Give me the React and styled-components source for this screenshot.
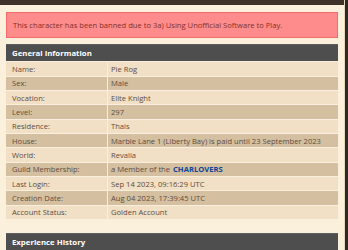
import React from "react";
import styled, { createGlobalStyle } from "styled-components";

const GlobalStyle = createGlobalStyle`
  html, body {
    margin: 0;
    padding: 0;
    background: #2f2923;
  }
  body {
    font-family: "Open Sans", "DejaVu Sans", sans-serif;
  }
`;

const Page = styled.div`
  display: flex;
  width: 348px;
  height: 250px;
  overflow: hidden;
`;

const Panel = styled.div`
  flex: 1;
  display: flex;
  flex-direction: column;
  background: #fbf0dc;
  border-right: 1px solid #e6d6bb;
`;

const Edge = styled.div`
  width: 3px;
  background: #2f2923;
`;

const TitleBar = styled.div`
  height: 7px;
  background: #3d332b;
  display: flex;
  align-items: flex-end;
  justify-content: center;
  overflow: hidden;
`;

const Title = styled.span`
  font-size: 13px;
  line-height: 13px;
  color: #7d746b;
  font-weight: 600;
  margin-bottom: 4px;
  padding-right: 8px;
`;

const Content = styled.div`
  display: flex;
  flex-direction: column;
  padding: 7px 6px 0 6px;
`;

const Alert = styled.div`
  height: 24px;
  display: flex;
  align-items: center;
  padding-left: 6px;
  background: #ff8c8c;
  border: 1px solid #f36b6b;
  color: #7f3028;
  font-size: 7.6px;
`;

const TableHeader = styled.div`
  height: 17px;
  display: flex;
  align-items: center;
  padding-left: 6px;
  background: #4e4e4e;
  color: #ffffff;
  font-weight: 700;
  font-size: 7.8px;
  border-top: 1px solid #5e5e5e;
  box-sizing: border-box;
  margin-top: ${(p) => p.$gap}px;
`;

const Table = styled.div`
  display: flex;
  flex-direction: column;
`;

const Row = styled.div`
  display: grid;
  grid-template-columns: 102px 1fr;
  height: 14.33px;
  background: ${(p) => (p.$dark ? "#d4c0a1" : "#f1e0c6")};
  border-top: 1px solid #f9efdf;
  box-sizing: border-box;
  font-size: 7.6px;
  color: #5e4b3c;
`;

const Cell = styled.div`
  display: flex;
  align-items: center;
  padding-left: ${(p) => (p.$value ? 3 : 6)}px;
  border-right: ${(p) => (p.$value ? "none" : "1px solid #f9efdf")};
  white-space: nowrap;
  overflow: hidden;
`;

const Guild = styled.b`
  color: #0a4397;
  margin-left: 3px;
`;

const rows = [
  ["Name:", "Pie Rog"],
  ["Sex:", "Male"],
  ["Vocation:", "Elite Knight"],
  ["Level:", "297"],
  ["Residence:", "Thais"],
  ["House:", "Marble Lane 1 (Liberty Bay) is paid until 23 September 2023"],
  ["World:", "Revalia"],
  ["Guild Membership:", "guild"],
  ["Last Login:", "Sep 14 2023, 09:16:29 UTC"],
  ["Creation Date:", "Aug 04 2023, 17:39:45 UTC"],
  ["Account Status:", "Golden Account"],
];

export default function App() {
  return (
    <>
      <GlobalStyle />
      <Page>
        <Panel>
          <TitleBar>
            <Title>Character Information</Title>
          </TitleBar>
          <Content>
            <Alert>
              This character has been banned due to 3a) Using Unofficial Software to Play.
            </Alert>
            <TableHeader $gap={6}>General Information</TableHeader>
            <Table>
              {rows.map(([label, value], i) => (
                <Row key={label} $dark={i % 2 === 1}>
                  <Cell>{label}</Cell>
                  <Cell $value>
                    {value === "guild" ? (
                      <>
                        a Member of the<Guild>CHARLOVERS</Guild>
                      </>
                    ) : (
                      value
                    )}
                  </Cell>
                </Row>
              ))}
            </Table>
            <TableHeader $gap={14}>Experience History</TableHeader>
          </Content>
        </Panel>
        <Edge />
      </Page>
    </>
  );
}
